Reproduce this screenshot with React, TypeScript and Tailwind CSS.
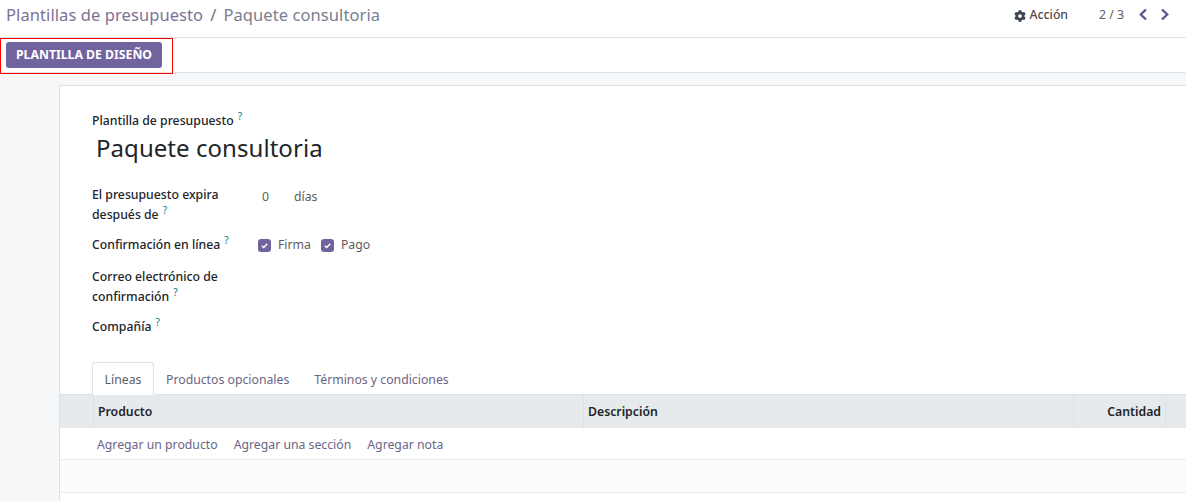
import React from "react";
import { FaCog } from "react-icons/fa";

const Help = () => (
  <sup className="ml-[4px] text-[10px] font-normal text-[#017e84] relative top-[-5px] leading-none">?</sup>
);

const Check = ({ label }: { label: string }) => (
  <div className="flex items-center">
    <span className="w-[13px] h-[13px] rounded-[3px] bg-[#71639e] flex items-center justify-center">
      <svg width="9" height="9" viewBox="0 0 10 10" fill="none">
        <path d="M2 5.2 L4.2 7.2 L8 3" stroke="white" strokeWidth="1.6" />
      </svg>
    </span>
    <span className="ml-[7px] text-[#5c5c5c]">{label}</span>
  </div>
);

const App = () => {
  return (
    <div className="relative w-[1186px] h-[501px] overflow-hidden bg-[#f6f7f9] text-[12.25px] text-[#212529] font-['Noto_Sans',sans-serif]">
      <div className="h-[38px] bg-white border-b border-[#dee2e6] flex items-center pl-[6px] pr-[16px]">
        <div className="text-[16.5px] text-[#7c7297] mb-[6px] tracking-[0.08px]">
          Plantillas de presupuesto
          <span className="text-[#6c6f85] mx-[7px]">/</span>
          <span className="text-[#77808f]">Paquete consultoria</span>
        </div>
        <div className="ml-auto flex items-center mb-[6px]">
          <FaCog className="text-[#3c4550] w-[12px] h-[12px] mr-[1px]" />
          <span className="ml-[3px] font-medium text-[#4c4c4c]">Acción</span>
          <span className="ml-[31px] text-[#5c5c5c]">2 / 3</span>
          <svg className="ml-[14px] mb-[3px]" width="10" height="13" viewBox="0 0 10 13" fill="none">
            <path d="M8 1.5 L2.8 6.5 L8 11.5" stroke="#5f5590" strokeWidth="2.4" />
          </svg>
          <svg className="ml-[12px] mb-[3px]" width="10" height="13" viewBox="0 0 10 13" fill="none">
            <path d="M2 1.5 L7.2 6.5 L2 11.5" stroke="#5f5590" strokeWidth="2.4" />
          </svg>
        </div>
      </div>

      <div className="h-[35px] bg-white border-b border-[#dee2e6] flex items-center pl-[6px]">
        <button className="h-[26px] w-[156px] mb-[1px] pt-[2px] rounded-[3px] bg-[#71639e] text-white text-[12.25px] font-bold">
          PLANTILLA DE DISEÑO
        </button>
      </div>

      <div className="ml-[59px] mt-[12px] h-[420px] bg-white border-l border-t border-[#dee2e6]">
        <div className="pl-[32px] pt-[26px]">
          <div className="font-medium leading-[18px]">
            Plantilla de presupuesto
            <Help />
          </div>
          <div className="ml-[4px] text-[24px] leading-[36px] tracking-[0.05px]">Paquete consultoria</div>

          <div className="mt-[19px] flex">
            <div className="w-[165px] font-medium leading-[20px]">
              El presupuesto expira
              <br />
              después de
              <Help />
            </div>
            <div className="flex text-[#5c5c5c] leading-[20px] pt-[2px]">
              <span className="ml-[5px] w-[32px]">0</span>
              <span>días</span>
            </div>
          </div>

          <div className="mt-[10px] flex items-center h-[20px]">
            <div className="w-[166px] font-medium">
              Confirmación en línea
              <Help />
            </div>
            <div className="flex gap-[10px]">
              <Check label="Firma" />
              <Check label="Pago" />
            </div>
          </div>

          <div className="mt-[12px] font-medium leading-[20px]">
            Correo electrónico de
            <br />
            confirmación
            <Help />
          </div>
          <div className="mt-[10px] font-medium leading-[20px]">
            Compañía
            <Help />
          </div>
        </div>

        <div className="mt-[24px] pl-[32px] flex items-end h-[33px]">
          <div className="h-[33px] w-[62px] pt-[2px] bg-white border border-b-0 border-[#dee2e6] rounded-t-[3px] flex items-center justify-center text-[#5c5c5c] relative top-[1px]">
            Líneas
          </div>
          <div className="h-[33px] pt-[6px] ml-[12px] flex items-center text-[#6b6585]">Productos opcionales</div>
          <div className="h-[33px] pt-[6px] ml-[25px] flex items-center text-[#6b6585]">Términos y condiciones</div>
        </div>

        <div className="h-[34px] bg-[#e7eaed] border-t border-[#dee2e6] flex font-semibold text-[#212529]">
          <div className="w-[34px] border-r border-[#dee2e6]" />
          <div className="w-[490px] border-r border-[#dee2e6] flex items-center pl-[4px] pt-[2px]">Producto</div>
          <div className="w-[490px] border-r border-[#dee2e6] flex items-center pl-[4px] pt-[2px]">Descripción</div>
          <div className="w-[92px] border-r border-[#dee2e6] flex items-center justify-end pr-[4px] pt-[2px]">Cantidad</div>
        </div>

        <div className="h-[32px] pt-[4px] flex items-center pl-[37px] gap-[16px] text-[#6b6585] border-b border-[#e9ecef]">
          <span>Agregar un producto</span>
          <span>Agregar una sección</span>
          <span>Agregar nota</span>
        </div>
        <div className="h-[33px] bg-[#fbfbfb] border-b border-[#e9ecef]" />
      </div>

      <div className="absolute left-0 top-[38px] w-[173px] h-[36px] border border-[#ff0000]" />
    </div>
  );
};

export default App;
